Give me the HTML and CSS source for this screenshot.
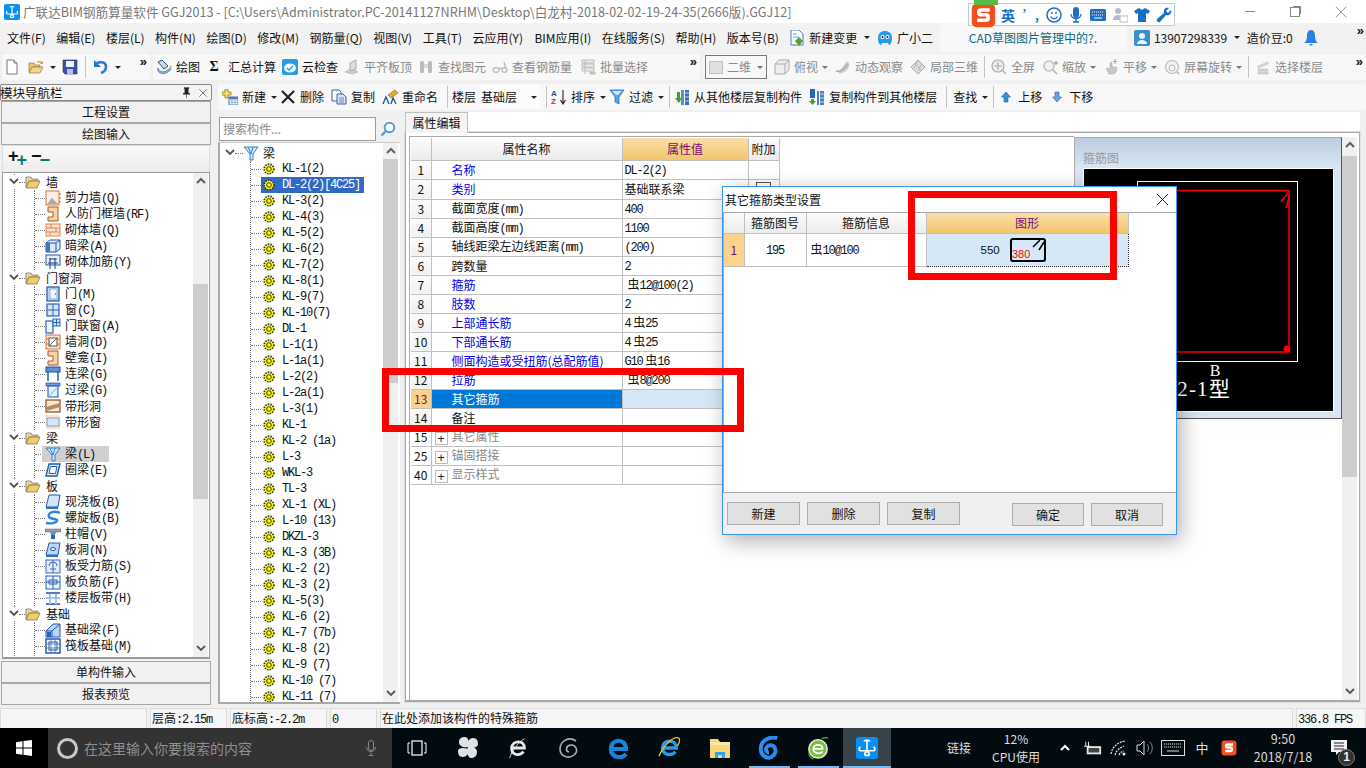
FILE: index.html
```html
<!DOCTYPE html>
<html lang="zh">
<head>
<meta charset="utf-8">
<title>广联达BIM钢筋算量软件 GGJ2013</title>
<link rel="stylesheet" href="styles.css">
</head>
<body>
<svg class="sprite" aria-hidden="true">
<defs>
<symbol id="bead" viewBox="0 0 16 16"><circle cx="8" cy="8" r="4.800" fill="#ff0" stroke="#333" stroke-width="1.700" stroke-dasharray="1.500 1.100"/><circle cx="8" cy="8" r="2.300" fill="#ff0" stroke="#222" stroke-width=".9"/></symbol>
<symbol id="folder" viewBox="0 0 16 16"><path d="M1 3h5l1 2h6v2H4L1 13z" fill="#e8d8a8" stroke="#8a7a50" stroke-width=".8"/><path d="M1 14l3-7h11l-3 7z" fill="#f1c96a" stroke="#8a7a50" stroke-width=".8"/></symbol>
<symbol id="beam" viewBox="0 0 16 16"><path d="M1 2h14l-5 7v6H7V9z" fill="#cfe6f8" stroke="#2f7fc8"/><path d="M5 2l3 7M10 2l-2 7" stroke="#2f7fc8" fill="none"/></symbol>
<symbol id="shear" viewBox="0 0 16 16"><rect x="1" y="1" width="13" height="14" fill="#fbeee3" stroke="#c77a45"/><path d="M2 14l5-6 6 6z" fill="#aaa"/><path d="M15 3v2M15 7v2M15 11v2" stroke="#d06a20"/></symbol>
<symbol id="frame" viewBox="0 0 16 16"><path d="M3 1h10v14H3v-4h5V6H3z" fill="#f7d2ac" stroke="#a85a20"/></symbol>
<symbol id="brick" viewBox="0 0 16 16"><rect x="1" y="2" width="14" height="12" fill="#fde2c8" stroke="#d98a55"/><path d="M1 6h14M1 10h14M6 2v4M11 6v4M5 10v4" stroke="#d98a55" fill="none"/></symbol>
<symbol id="dark" viewBox="0 0 16 16"><path d="M1 5l4-3h10v9l-4 3H1z" fill="#dbe8f6" stroke="#24559b"/><path d="M1 5h10v9M11 5l4-3" fill="none" stroke="#24559b"/><rect x="1" y="5" width="4" height="9" fill="#3f78bb"/></symbol>
<symbol id="mrebar" viewBox="0 0 16 16"><rect x="1" y="1" width="14" height="10" fill="#e6f0fb" stroke="#2a5ca8"/><path d="M4 5h8M5 4v11M10 4v11M3 9h10" stroke="#1a3f90" fill="none"/></symbol>
<symbol id="door" viewBox="0 0 16 16"><rect x="2" y="1" width="12" height="14" fill="#bcd6f4" stroke="#1c55a8" stroke-width="1.200"/><rect x="5" y="3" width="7" height="10" fill="#f1f7fe" stroke="#6a98d6" stroke-width=".7"/><circle cx="10.500" cy="8" r=".7" fill="#1c55a8"/></symbol>
<symbol id="win" viewBox="0 0 16 16"><rect x="2" y="2" width="12" height="12" fill="#d6e7fa" stroke="#2a62b8" stroke-width="1.200"/><path d="M8 2v12M2 8h12" stroke="#2a62b8"/></symbol>
<symbol id="dw" viewBox="0 0 16 16"><rect x="1" y="3" width="7" height="12" fill="#eef5fd" stroke="#2a62b8" stroke-width="1.200"/><rect x="8" y="1" width="7" height="7" fill="#cfe2f8" stroke="#2a62b8"/><path d="M11.500 1v7M8 4.500h7" stroke="#2a62b8"/></symbol>
<symbol id="whole" viewBox="0 0 16 16"><rect x="1" y="1" width="14" height="14" fill="#fbe3ce" stroke="#c77a45"/><path d="M1 5h3M1 10h3M12 5h3M12 10h3" stroke="#c77a45"/><rect x="4" y="4" width="8" height="8" fill="#fff" stroke="#555"/><path d="M4 12l8-8" stroke="#555"/></symbol>
<symbol id="link" viewBox="0 0 16 16"><rect x="1" y="1" width="14" height="5" fill="#5f8fd0" stroke="#1c4fa0"/><path d="M3 6v9M13 6v9" stroke="#1c4fa0" stroke-width="1.400"/></symbol>
<symbol id="lintel" viewBox="0 0 16 16"><rect x="1" y="1" width="14" height="3" fill="#6f9fdc" stroke="#1c4fa0" stroke-width=".7"/><rect x="3" y="4" width="10" height="11" fill="#e2eefb" stroke="#1c4fa0"/><path d="M3 15L13 5" stroke="#7fa8dc"/></symbol>
<symbol id="strip" viewBox="0 0 16 16"><rect x="1" y="2" width="14" height="12" fill="#fbe6d0" stroke="#8a4a20" stroke-width="1.200"/><path d="M1 9L15 5v4L1 13z" fill="#b98a60"/></symbol>
<symbol id="stripw" viewBox="0 0 16 16"><rect x="1" y="1" width="14" height="14" fill="#fbe3ce"/><rect x="2" y="4" width="12" height="8" fill="#d6e6fa" stroke="#7ea4d8"/></symbol>
<symbol id="ring" viewBox="0 0 16 16"><path d="M4 2h11l-3 12H1z" fill="#eaf3fd" stroke="#1c5ab0" stroke-width="1.400"/><path d="M5.500 4.500h6.500l-1.500 7H4z" fill="#fff" stroke="#1c5ab0"/></symbol>
<symbol id="slab" viewBox="0 0 16 16"><path d="M4 1h11l-2 12H1z" fill="#d2e5fb" stroke="#1c5ab0"/><path d="M1 13h12v2H1z" fill="#2a6fc8"/></symbol>
<symbol id="spiral" viewBox="0 0 16 16"><path d="M15 3C9 0 2 3 4 7c2 3 9 1 8 4-1 2-6 3-11 2" fill="none" stroke="#2a84dc" stroke-width="2.400"/></symbol>
<symbol id="cap" viewBox="0 0 16 16"><rect x="0" y="3" width="16" height="3" fill="#9a9a9a" stroke="#666" stroke-width=".5"/><path d="M5 6h6l-1 3H6z" fill="#5a8fd0"/><rect x="6" y="9" width="4" height="4" fill="#2a62b0"/></symbol>
<symbol id="shole" viewBox="0 0 16 16"><path d="M4 1h11l-2 12H1z" fill="#bcd7f6" stroke="#1c5ab0"/><ellipse cx="8" cy="7" rx="2.500" ry="1.500" fill="#fff" stroke="#1c5ab0"/><path d="M1 13h12v2H1z" fill="#2a6fc8"/></symbol>
<symbol id="srebar" viewBox="0 0 16 16"><rect x="1" y="2" width="14" height="13" fill="#e2edfb" stroke="#3a6fb8"/><path d="M8 2v13M4 8a4 4 0 0 1 8 0" fill="none" stroke="#3a6fb8"/><path d="M5 11h6" stroke="#3a6fb8"/></symbol>
<symbol id="nrebar" viewBox="0 0 16 16"><rect x="1" y="2" width="14" height="13" fill="#e8f1fc" stroke="#2a62b0"/><path d="M8 2v13M1 8h14M4 6h8v4H4z" fill="none" stroke="#2a62b0"/></symbol>
<symbol id="band" viewBox="0 0 16 16"><path d="M1 3h14M1 14h14" stroke="#1c4fa0" stroke-width="1.600"/><path d="M5 3v11M11 3v11M1 8h14" stroke="#4f84c8"/><rect x="4" y="8" width="2" height="6" fill="#a8c8ee"/><rect x="10" y="8" width="2" height="6" fill="#a8c8ee"/></symbol>
<symbol id="fbeam" viewBox="0 0 16 16"><path d="M1 15V9l7-7h7v13z" fill="#bcd4f0" stroke="#1c5ab0"/><path d="M1 9h6v6M7 9l8-7" fill="none" stroke="#1c5ab0"/><rect x="2" y="10" width="4" height="5" fill="#2a62b8"/></symbol>
<symbol id="raft" viewBox="0 0 16 16"><rect x="1" y="1" width="14" height="14" fill="#fff" stroke="#1c4fa0" stroke-width="1.400"/><rect x="4" y="4" width="8" height="8" fill="none" stroke="#1c4fa0"/><path d="M1 6h14M1 10h14M6 1v14M10 1v14" stroke="#3a6fb8" stroke-width=".8"/></symbol>
<symbol id="sump" viewBox="0 0 16 16"><path d="M2 4h4M10 4h4" stroke="#1c5ab0" stroke-width="2"/></symbol>
<symbol id="newdoc" viewBox="0 0 16 16"><path d="M3 1h7l3 3v11H3z" fill="#fff" stroke="#777"/><path d="M10 1v3h3" fill="#e4e4e4" stroke="#777"/></symbol>
<symbol id="open" viewBox="0 0 16 16"><path d="M1 4h5l1 2h5v2H4l-2 5H1z" fill="#e8c870" stroke="#9a7a30" stroke-width=".7"/><path d="M1 14l3-6h11l-3 6z" fill="#f2d68a" stroke="#9a7a30" stroke-width=".7"/><path d="M8 4c1-2 4-3 6-1l1-1v3h-3l1-1c-1-1-3-1-5 0z" fill="#c7a040"/></symbol>
<symbol id="save" viewBox="0 0 16 16"><path d="M1 1h14v14H3l-2-2z" fill="#3d4fa8" stroke="#26336e" stroke-width=".6"/><rect x="4" y="2" width="8" height="6" fill="#eef2ff"/><rect x="5" y="10" width="6" height="5" fill="#b8c2e8"/></symbol>
<symbol id="undo" viewBox="0 0 16 16"><path d="M2 6c3-4 11-4 11 2 0 3-2 5-5 6" fill="none" stroke="#2a78d0" stroke-width="2.600"/><path d="M1 1v7h7z" fill="#2a78d0"/></symbol>
<symbol id="draw" viewBox="0 0 16 16"><path d="M2 9c-2 4 4 7 8 5 3-1 5-3 5-5l-5 3C6 14 3 12 2 9z" fill="#8fb0dc" stroke="#3a5f9a" stroke-width=".6"/><path d="M2 3l4-2 6 6-4 3z" fill="#c9d8ee" stroke="#2d4f80"/><path d="M13 9l2-3 1 1-2 3z" fill="#d8b040"/></symbol>
<symbol id="cloud" viewBox="0 0 16 16"><rect x="0" y="0" width="16" height="16" rx="2" fill="#2b9be0"/><ellipse cx="8" cy="9" rx="6" ry="4.500" fill="#eef8ff"/><path d="M5 9l2 2 4-4" fill="none" stroke="#2b9be0" stroke-width="1.400"/></symbol>
<symbol id="align" viewBox="0 0 16 16"><path d="M1 13l6-3 7 3-6 2z" fill="#ccc" stroke="#aaa" stroke-width=".6"/><path d="M6 10V4l6-3v9l-5 2z" fill="#ddd" stroke="#aaa"/></symbol>
<symbol id="bino" viewBox="0 0 16 16"><rect x="2" y="2" width="4" height="12" rx="1.500" fill="#bbb"/><rect x="10" y="2" width="4" height="12" rx="1.500" fill="#bbb"/><rect x="6" y="5" width="4" height="4" fill="#d8d8d8"/></symbol>
<symbol id="glass" viewBox="0 0 16 16"><path d="M1 11c0-3 6-3 6 0s-6 3-6 0zM10 11c0-3 5-3 5 0s-5 3-5 0zM7 10c1-1 2-1 3 0M14 10l-2-7" fill="none" stroke="#bbb" stroke-width="1.300"/></symbol>
<symbol id="batch" viewBox="0 0 16 16"><path d="M2 1h12v3H2zM2 5h12v3H2zM2 9h12v3H2z" fill="#eee" stroke="#bbb"/><path d="M5 1v14M10 13h5v2h-5z" fill="#ccc" stroke="#bbb"/></symbol>
<symbol id="cube" viewBox="0 0 16 16"><path d="M1 5l4-4h10v10l-4 4H1z" fill="#eee" stroke="#aaa"/><path d="M1 5h10v10M11 5l4-4" fill="none" stroke="#aaa"/></symbol>
<symbol id="orbit" viewBox="0 0 16 16"><path d="M3 14l9-12c3 2 3 6 0 9s-7 4-9 3z" fill="#ccc"/><path d="M1 12c3 1 8-1 12-7" fill="none" stroke="#aaa" stroke-width="1.400"/></symbol>
<symbol id="local" viewBox="0 0 16 16"><path d="M8 1l7 7-7 7-7-7z" fill="#ddd" stroke="#aaa"/><path d="M4 4l8 8M8 1L4 9M12 4l-4 8" fill="none" stroke="#aaa" stroke-width=".8"/></symbol>
<symbol id="zfull" viewBox="0 0 16 16"><circle cx="7" cy="7" r="6" fill="#f0f0f0" stroke="#aaa" stroke-width="1.200"/><path d="M7 3v8M3 7h8M11 11l4 4" stroke="#aaa" stroke-width="1.200"/></symbol>
<symbol id="zoom" viewBox="0 0 16 16"><circle cx="7" cy="7" r="5" fill="#f2f2f2" stroke="#c0c0c0" stroke-width="1.600"/><path d="M11 11l4 4M14 2v4M12 4h4" stroke="#aaa" stroke-width="1.400"/></symbol>
<symbol id="pan" viewBox="0 0 16 16"><path d="M3 9l4 1V4c1-1 2-1 2 0v4h4c1 0 1 3 0 5l-2 2H6z" fill="#c8c8c8" stroke="#aaa" stroke-width=".6"/><path d="M12 0v5M10 2.500h4" stroke="#aaa"/></symbol>
<symbol id="rot" viewBox="0 0 16 16"><circle cx="8" cy="8" r="6.500" fill="#f2f2f2" stroke="#bbb" stroke-width="1.200"/><circle cx="8" cy="9" r="3" fill="none" stroke="#bbb"/><path d="M13 13l2 2" stroke="#aaa" stroke-width="1.400"/></symbol>
<symbol id="layer" viewBox="0 0 16 16"><path d="M3 7l10-4v2L3 9zM3 10h10v2H3zM3 13h10v2H3z" fill="#d8d8d8" stroke="#bbb" stroke-width=".6"/></symbol>
<symbol id="tnew" viewBox="0 0 16 16"><path d="M3 0h3v3h3v3H6v3H3V6H0V3h3z" fill="#f7e06a" stroke="#7a6a10" stroke-width=".7"/><rect x="7" y="8" width="9" height="8" fill="#fff" stroke="#4f78b0"/><path d="M7 11h9M10 8v8M13 8v8M7 13.500h9" stroke="#6f96c8" stroke-width=".7"/><rect x="7" y="8" width="9" height="2" fill="#4f78b0"/></symbol>
<symbol id="tdel" viewBox="0 0 16 16"><path d="M2 2l12 12M14 2L2 14" stroke="#222" stroke-width="2.200"/></symbol>
<symbol id="tcopy" viewBox="0 0 16 16"><path d="M1 1h7l2 2v9H1z" fill="#fff" stroke="#3a5f9a"/><path d="M6 5h6l3 3v7H6z" fill="#dce8f7" stroke="#3a5f9a"/><path d="M8 9h5M8 11h5M8 13h5" stroke="#3a5f9a" stroke-width=".7"/></symbol>
<symbol id="tren" viewBox="0 0 16 16"><path d="M6 6l7-5 3 3-7 5z" fill="#d8b040" stroke="#7a6010" stroke-width=".6"/><path d="M1 15l3-7 3 7M9 15l2-6 3 6" fill="none" stroke="#1f4f9f" stroke-width="1.300"/></symbol>
<symbol id="sort" viewBox="0 0 16 16"><text x="0" y="7" class="az az-a">A</text><text x="0" y="15" class="az az-z">Z</text><path d="M12 1v13M9.500 11l2.500 4 2.500-4" fill="none" stroke="#222" stroke-width="1.100"/></symbol>
<symbol id="filter" viewBox="0 0 16 16"><path d="M1 1h14L10 8v7l-4-2V8z" fill="#5aa2e8" stroke="#1f6ab8" stroke-width=".7"/><path d="M3 2h10L9 6H7z" fill="#cfe6fa"/></symbol>
<symbol id="cin" viewBox="0 0 16 16"><path d="M1 9l4 5 3-5H6V3H3v6z" fill="#3aa03a"/><rect x="7" y="1" width="3" height="15" fill="#5a8fd0"/><rect x="11" y="1" width="4" height="15" fill="#3a6fb0"/><path d="M11 4h4M11 8h4M11 12h4" stroke="#fff" stroke-width=".7"/></symbol>
<symbol id="cout" viewBox="0 0 16 16"><rect x="1" y="0" width="5" height="9" fill="#2a62c0"/><path d="M2 10h3v2h2l-3.500 4L0 12h2z" fill="#3aa03a"/><path d="M8 2h2v14H8zM11 2h4v14h-4z" fill="#4f7fc0"/><path d="M11 5h4M11 9h4M11 13h4" stroke="#fff" stroke-width=".7"/></symbol>
<symbol id="up" viewBox="0 0 16 16"><path d="M8 3l4.500 5H10v5H6V8H3.500z" fill="#3a8fe0" stroke="#1c5ab0" stroke-width=".6"/></symbol>
<symbol id="down" viewBox="0 0 16 16"><path d="M8 13L3.500 8H6V3h4v5h2.500z" fill="#6f9fe0" stroke="#3a62b0" stroke-width=".6"/></symbol>
<symbol id="mdoc" viewBox="0 0 16 16"><path d="M2 0h8l4 4v11H2z" fill="#fff" stroke="#3a7fd0"/><path d="M4 4h4M4 7h6" stroke="#3a7fd0" stroke-width=".8"/><path d="M10 7l4 4-4 5-4-5z" fill="#5aa02a"/></symbol>
<symbol id="masc" viewBox="0 0 16 16"><path d="M1 8c0-5 3-7 7-7s7 2 7 7c0 5-2 7-3 7l-1-2H5l-1 2C3 15 1 13 1 8z" fill="#2a9be8"/><circle cx="5.500" cy="7" r="2" fill="#fff"/><circle cx="10.500" cy="7" r="2" fill="#fff"/><circle cx="5.500" cy="7" r="1" fill="#124"/><circle cx="10.500" cy="7" r="1" fill="#124"/></symbol>
<symbol id="avatar" viewBox="0 0 16 16"><rect width="16" height="16" rx="2" fill="#3a8fc8"/><circle cx="8" cy="6" r="3" fill="#eaf5fc"/><path d="M3 14c0-3 3-4 5-4s5 1 5 4z" fill="#eaf5fc"/></symbol>
<symbol id="bell" viewBox="0 0 16 16"><path d="M8 0c3 0 4 3 4 6s1 6 3 7H1c2-1 3-4 3-7s1-6 4-6z" fill="#2a7fe0"/><path d="M6 14h4l-2 2z" fill="#2a7fe0"/></symbol>
<symbol id="pin" viewBox="0 0 16 16"><path d="M5 2h6v1H10v6h2v1H4V9h2V3H5zM8 10v5" fill="#222" stroke="#222" stroke-width=".7"/></symbol>
<symbol id="x" viewBox="0 0 16 16"><path d="M2 2l12 12M14 2L2 14" stroke="currentColor" stroke-width="1" fill="none"/></symbol>
<symbol id="chev" viewBox="0 0 10 8"><path d="M1 1l4 4 4-4" fill="none" stroke="#555" stroke-width="1.800"/></symbol>
<symbol id="chup" viewBox="0 0 10 8"><path d="M1 6l4-4 4 4" fill="none" stroke="#606060" stroke-width="2"/></symbol>
<symbol id="lens" viewBox="0 0 16 16"><circle cx="9.500" cy="6.500" r="4.800" fill="#fff" stroke="#4a9fe0" stroke-width="2"/><path d="M6 10l-4.500 4.500" stroke="#4a9fe0" stroke-width="2.400"/></symbol>
<symbol id="sg" viewBox="0 0 16 16"><rect x=".5" y=".5" width="15" height="15" rx="3" fill="#f0501e"/><path d="M12 4.500H6.500c-2 0-2 3 0 3h3c2 0 2 3.500 0 3.500H4" fill="none" stroke="#fff" stroke-width="2.300"/></symbol>
<symbol id="smile" viewBox="0 0 16 16"><circle cx="8" cy="8" r="7" fill="none" stroke="#1a6fc4" stroke-width="1.500"/><path d="M6 5v2M10 5v2M4.500 9.500c2 3 5 3 7 0" fill="none" stroke="#1a6fc4" stroke-width="1.300"/></symbol>
<symbol id="smic" viewBox="0 0 16 16"><rect x="5" y="0" width="6" height="11" rx="3" fill="#1a6fc4"/><path d="M3 7c0 6 10 6 10 0M8 12v3M5 15h6" fill="none" stroke="#1a6fc4" stroke-width="1.300"/></symbol>
<symbol id="skb" viewBox="0 0 16 16"><rect y="2" width="16" height="12" rx="1.500" fill="#1a6fc4"/><path d="M2 5h12M2 8h12" stroke="#fff" stroke-dasharray="1 1"/><path d="M4 11h8" stroke="#fff"/></symbol>
<symbol id="suser" viewBox="0 0 16 16"><circle cx="6" cy="4" r="3" fill="#b4bcc4"/><path d="M1 13c0-4 3-5 5-5s4 1 4 5z" fill="#b4bcc4"/><rect x="8" y="9" width="8" height="6" fill="#fff" stroke="#b4bcc4"/></symbol>
<symbol id="shirt" viewBox="0 0 16 16"><path d="M5 1l3 2 3-2 5 3-2 3-2-1v9H4V6L2 7 0 4z" fill="#1a6fc4"/></symbol>
<symbol id="wrench" viewBox="0 0 16 16"><path d="M15 3l-3 3-2-2 3-3c-3-1-6 1-5 5L1 12c-1 2 1 4 3 3l6-7c4 1 6-2 5-5z" fill="#1a6fc4"/></symbol>
<symbol id="wlogo" viewBox="0 0 16 16"><path d="M0 2.300l6.500-1v6.200H0zM7.500 1.100L16 0v7.500H7.500zM0 8.500h6.500v6.200l-6.500-1zM7.500 8.500H16V16l-8.500-1.200z" fill="#fff"/></symbol>
<symbol id="tmic" viewBox="0 0 16 16"><rect x="5.500" y="0.500" width="5" height="10" rx="2.500" fill="none" stroke="#888"/><path d="M3.500 7c0 6 9 6 9 0M8 12.500V15M5.500 15.500h5" fill="none" stroke="#888"/></symbol>
<symbol id="tv" viewBox="0 0 20 16"><rect x="5" y="1" width="10" height="14" fill="none" stroke="#fff" stroke-width="1.200"/><path d="M3 3H1v10h2M17 3h2v10h-2" fill="none" stroke="#fff"/></symbol>
<symbol id="fan" viewBox="0 0 22 24"><path d="M11 11C6 12 2 10 2 6s3-5 6-5 5 5 3 10zM11 11c5-1 9 1 9 5s-3 6-6 6-5-6-3-11zM11 11C10 6 12 2 16 2s5 3 5 6-5 5-10 3zM11 13c1 4-1 8-5 8s-5-3-5-6 5-4 10-2z" fill="#dfe3e6"/></symbol>
<symbol id="iew" viewBox="0 0 22 26"><path d="M4 13h14c0-9-13-9-14 0 0 8 9 9 13 4" fill="none" stroke="#e8e8e8" stroke-width="3"/><path d="M2 24c2-8 10-18 16-21" fill="none" stroke="#e8e8e8"/></symbol>
<symbol id="swirl" viewBox="0 0 22 24"><path d="M19 5C12 0 3 5 3 13s9 10 14 6 2-10-3-10-6 6-2 7" fill="none" stroke="#aab0b4" stroke-width="1.600"/></symbol>
<symbol id="edge" viewBox="0 0 22 24"><path d="M3 13h15c0-11-15-11-15 0 0 9 11 10 15 5" fill="none" stroke="#1a84e0" stroke-width="4.200"/></symbol>
<symbol id="ie" viewBox="0 0 24 26"><path d="M5 13h15c0-10-15-10-15 0 0 8 10 9 14 4" fill="none" stroke="#2a9bea" stroke-width="3.600"/><path d="M1 22C6 10 17 0 22 2c3 1 1 6-1 9" fill="none" stroke="#f2c81e" stroke-width="1.400"/></symbol>
<symbol id="tfold" viewBox="0 0 22 24"><path d="M1 3h8l2 3h10v16H1z" fill="#f8d674"/><path d="M1 6h20v3H1z" fill="#fbe8a8"/><rect x="6" y="16" width="10" height="6" fill="#2f9fe6"/><rect x="9" y="19" width="4" height="3" fill="#f8d674"/></symbol>
<symbol id="gl" viewBox="0 0 24 26"><path d="M21 2C12 0 3 5 3 14c0 7 6 11 11 9s7-8 3-12c-3-2-7-1-8 2s1 5 3 5" fill="none" stroke="#2a8ff0" stroke-width="4.200"/></symbol>
<symbol id="ge" viewBox="0 0 24 26"><circle cx="12" cy="14" r="10" fill="#7ac143" stroke="#e8f4d8" stroke-width="1.600"/><path d="M7 14h10c0-6-10-6-10 0 0 5 7 6 10 3" fill="none" stroke="#fff" stroke-width="2"/><path d="M16 3c3-2 5-1 7-1" stroke="#4a9a2a" stroke-width="1.500" fill="none"/><path d="M2 18c0 3 2 6 5 7" stroke="#4a9a2a" stroke-width="1.500" fill="none"/></symbol>
<symbol id="app" viewBox="0 0 24 24"><rect width="24" height="24" rx="3" fill="#0a8ef0"/><path d="M12 4v12M5 11c-2 0-2 4 0 4h14c2 0 2-4 0-4M9 5c0-2 6-2 6 0M12 16c-2 0-3 3-2 4h4c1-1 0-4-2-4z" fill="none" stroke="#fff" stroke-width="1.800"/></symbol>
<symbol id="trayb" viewBox="0 0 20 16"><rect x="3" y="6" width="16" height="9" fill="#e8e8e8"/><rect x="5" y="8" width="12" height="5" fill="#444"/><path d="M2 1v5M5 1v5M0 6h7" stroke="#fff"/></symbol>
<symbol id="wifi" viewBox="0 0 18 16"><path d="M1 14C2 7 8 2 15 1M5 15c1-4 4-7 9-9M9 15c1-2 2-3 5-4" fill="none" stroke="#e0e0e0" stroke-width="1.300" stroke-dasharray="2 1"/><circle cx="14" cy="14" r="1.600" fill="#e0e0e0"/></symbol>
<symbol id="vol" viewBox="0 0 18 16"><path d="M1 5h3l4-4v14l-4-4H1z" fill="none" stroke="#e0e0e0"/><path d="M11 4c2 2 2 6 0 8M14 2c3 3 3 9 0 12" fill="none" stroke="#888"/></symbol>
<symbol id="kbd" viewBox="0 0 24 16"><rect x=".5" y=".5" width="23" height="15" fill="none" stroke="#e0e0e0"/><path d="M3 4h18M3 7h18" stroke="#e0e0e0" stroke-dasharray="1.200 .8"/><path d="M6 11h12" stroke="#e0e0e0"/></symbol>
<symbol id="note" viewBox="0 0 16 16"><path d="M0 0h16v12H8l-3 3v-3H0z" fill="#f2f2f2"/><path d="M3 3h10M3 6h10M3 9h10" stroke="#222"/></symbol>
</defs>
</svg>

<div class="app">
  <header class="title">
    <svg class="i ttl-ic"><use href="#app"/></svg>
    <span class="ttl-t">广联达BIM钢筋算量软件 GGJ2013 - [C:\Users\Administrator.PC-20141127NRHM\Desktop\白龙村-2018-02-02-19-24-35(2666版).GGJ12]</span>
    <div class="wc">
      <span class="wc-min"></span>
      <span class="wc-max"></span>
      <svg class="i wc-x"><use href="#x"/></svg>
    </div>
  </header>

  <nav class="menu">
    <span>文件(F)</span><span>编辑(E)</span><span>楼层(L)</span><span>构件(N)</span><span>绘图(D)</span><span>修改(M)</span><span>钢筋量(Q)</span><span>视图(V)</span><span>工具(T)</span><span>云应用(Y)</span><span class="bim">BIM应用(I)</span><span>在线服务(S)</span><span>帮助(H)</span><span>版本号(B)</span>
    <span class="it"><svg class="i"><use href="#mdoc"/></svg>新建变更<b class="dd dd-m"></b></span>
    <span class="it"><svg class="i"><use href="#masc"/></svg>广小二</span>
    <span class="cad">CAD草图图片管理中的?.</span>
    <span class="it acct"><svg class="i"><use href="#avatar"/></svg>13907298339<b class="dd dd-m"></b></span>
    <span class="bean">造价豆:0</span>
    <svg class="i bell"><use href="#bell"/></svg>
    <span class="more">»</span>
  </nav>

  <div class="tbar1">
    <div class="blk b1">
      <svg class="i b1-new"><use href="#newdoc"/></svg>
      <svg class="i"><use href="#open"/></svg><b class="dd"></b>
      <svg class="i"><use href="#save"/></svg>
      <span class="sep"></span>
      <svg class="i"><use href="#undo"/></svg><b class="dd"></b>
      <span class="more">»</span>
    </div>
    <div class="blk b2">
      <span class="it"><svg class="i"><use href="#draw"/></svg>绘图</span>
      <span class="it"><span class="sig">Σ</span>汇总计算</span>
      <span class="it"><svg class="i"><use href="#cloud"/></svg>云检查</span>
      <span class="it off"><svg class="i"><use href="#align"/></svg>平齐板顶</span>
      <span class="it off"><svg class="i"><use href="#bino"/></svg>查找图元</span>
      <span class="it off"><svg class="i"><use href="#glass"/></svg>查看钢筋量</span>
      <span class="it off b2-last"><svg class="i"><use href="#batch"/></svg>批量选择</span>
      <span class="more">»</span>
    </div>
    <div class="blk b3">
      <span class="combo off"><i class="sq"></i>二维<b class="dd dd-g"></b></span>
      <span class="it off"><svg class="i"><use href="#cube"/></svg>俯视<b class="dd dd-g"></b></span>
      <span class="it off"><svg class="i"><use href="#orbit"/></svg>动态观察</span>
      <span class="it off"><svg class="i"><use href="#local"/></svg>局部三维</span>
      <span class="sep"></span>
      <span class="it off"><svg class="i"><use href="#zfull"/></svg>全屏</span>
      <span class="it off"><svg class="i"><use href="#zoom"/></svg>缩放<b class="dd dd-g"></b></span>
      <span class="it off"><svg class="i"><use href="#pan"/></svg>平移<b class="dd dd-g"></b></span>
      <span class="it off"><svg class="i"><use href="#rot"/></svg>屏幕旋转<b class="dd dd-g"></b></span>
      <span class="sep"></span>
      <span class="it off"><svg class="i"><use href="#layer"/></svg>选择楼层</span>
      <span class="more">»</span>
    </div>
  </div>

  <main class="main">
    <aside class="left">
      <div class="lhead"><span>模块导航栏</span><svg class="i pin"><use href="#pin"/></svg><svg class="i lx"><use href="#x"/></svg></div>
      <div class="lbtn">工程设置</div>
      <div class="lbtn">绘图输入</div>
      <div class="ltools">
        <span class="pm">+<em>+</em></span>
        <span class="pm mn">−<em>−</em></span>
      </div>
      <div class="ltree">
        <div class="tbody">
          <div class="sec">
            <div class="sh"><svg class="c"><use href="#chev"/></svg><i class="tk6"></i><svg class="i"><use href="#folder"/></svg><span>墙</span></div>
            <div class="grp">
              <div class="n"><i class="tk"></i><svg class="i"><use href="#shear"/></svg><span>剪力墙<span class="m">(Q)</span></span></div>
              <div class="n"><i class="tk"></i><svg class="i"><use href="#frame"/></svg><span>人防门框墙<span class="m">(RF)</span></span></div>
              <div class="n"><i class="tk"></i><svg class="i"><use href="#brick"/></svg><span>砌体墙<span class="m">(Q)</span></span></div>
              <div class="n"><i class="tk"></i><svg class="i"><use href="#dark"/></svg><span>暗梁<span class="m">(A)</span></span></div>
              <div class="n"><i class="tk"></i><svg class="i"><use href="#mrebar"/></svg><span>砌体加筋<span class="m">(Y)</span></span></div>
            </div>
          </div>
          <div class="sec">
            <div class="sh"><svg class="c"><use href="#chev"/></svg><i class="tk6"></i><svg class="i"><use href="#folder"/></svg><span>门窗洞</span></div>
            <div class="grp">
              <div class="n"><i class="tk"></i><svg class="i"><use href="#door"/></svg><span>门<span class="m">(M)</span></span></div>
              <div class="n"><i class="tk"></i><svg class="i"><use href="#win"/></svg><span>窗<span class="m">(C)</span></span></div>
              <div class="n"><i class="tk"></i><svg class="i"><use href="#dw"/></svg><span>门联窗<span class="m">(A)</span></span></div>
              <div class="n"><i class="tk"></i><svg class="i"><use href="#whole"/></svg><span>墙洞<span class="m">(D)</span></span></div>
              <div class="n"><i class="tk"></i><svg class="i"><use href="#frame"/></svg><span>壁龛<span class="m">(I)</span></span></div>
              <div class="n"><i class="tk"></i><svg class="i"><use href="#link"/></svg><span>连梁<span class="m">(G)</span></span></div>
              <div class="n"><i class="tk"></i><svg class="i"><use href="#lintel"/></svg><span>过梁<span class="m">(G)</span></span></div>
              <div class="n"><i class="tk"></i><svg class="i"><use href="#strip"/></svg><span>带形洞</span></div>
              <div class="n"><i class="tk"></i><svg class="i"><use href="#stripw"/></svg><span>带形窗</span></div>
            </div>
          </div>
          <div class="sec">
            <div class="sh"><svg class="c"><use href="#chev"/></svg><i class="tk6"></i><svg class="i"><use href="#folder"/></svg><span>梁</span></div>
            <div class="grp">
              <div class="n"><i class="tk"></i><span class="hl"><svg class="i"><use href="#beam"/></svg><span>梁<span class="m">(L)</span></span></span></div>
              <div class="n"><i class="tk"></i><svg class="i"><use href="#ring"/></svg><span>圈梁<span class="m">(E)</span></span></div>
            </div>
          </div>
          <div class="sec">
            <div class="sh"><svg class="c"><use href="#chev"/></svg><i class="tk6"></i><svg class="i"><use href="#folder"/></svg><span>板</span></div>
            <div class="grp">
              <div class="n"><i class="tk"></i><svg class="i"><use href="#slab"/></svg><span>现浇板<span class="m">(B)</span></span></div>
              <div class="n"><i class="tk"></i><svg class="i"><use href="#spiral"/></svg><span>螺旋板<span class="m">(B)</span></span></div>
              <div class="n"><i class="tk"></i><svg class="i"><use href="#cap"/></svg><span>柱帽<span class="m">(V)</span></span></div>
              <div class="n"><i class="tk"></i><svg class="i"><use href="#shole"/></svg><span>板洞<span class="m">(N)</span></span></div>
              <div class="n"><i class="tk"></i><svg class="i"><use href="#srebar"/></svg><span>板受力筋<span class="m">(S)</span></span></div>
              <div class="n"><i class="tk"></i><svg class="i"><use href="#nrebar"/></svg><span>板负筋<span class="m">(F)</span></span></div>
              <div class="n"><i class="tk"></i><svg class="i"><use href="#band"/></svg><span>楼层板带<span class="m">(H)</span></span></div>
            </div>
          </div>
          <div class="sec">
            <div class="sh"><svg class="c"><use href="#chev"/></svg><i class="tk6"></i><svg class="i"><use href="#folder"/></svg><span>基础</span></div>
            <div class="grp">
              <div class="n"><i class="tk"></i><svg class="i"><use href="#fbeam"/></svg><span>基础梁<span class="m">(F)</span></span></div>
              <div class="n"><i class="tk"></i><svg class="i"><use href="#raft"/></svg><span>筏板基础<span class="m">(M)</span></span></div>
              <div class="n"><i class="tk"></i><svg class="i"><use href="#sump"/></svg></div>
            </div>
          </div>
        </div>
        <div class="vs vs-l">
          <svg class="ar"><use href="#chup"/></svg>
          <div class="thumb"></div>
          <svg class="ar"><use href="#chev"/></svg>
        </div>
      </div>
      <div class="lbtn lb2">单构件输入</div>
      <div class="lbtn">报表预览</div>
    </aside>

    <section class="right">
      <div class="tbar2">
        <span class="it"><svg class="i"><use href="#tnew"/></svg>新建<b class="dd"></b></span>
        <span class="it"><svg class="i"><use href="#tdel"/></svg>删除</span>
        <span class="it"><svg class="i"><use href="#tcopy"/></svg>复制</span>
        <span class="it"><svg class="i"><use href="#tren"/></svg>重命名</span>
        <span class="sep"></span>
        <span>楼层</span>
        <span class="fl">基础层<b class="dd"></b></span>
        <span class="sep"></span>
        <span class="it"><svg class="i"><use href="#sort"/></svg>排序<b class="dd"></b></span>
        <span class="it"><svg class="i"><use href="#filter"/></svg>过滤<b class="dd"></b></span>
        <span class="sep"></span>
        <span class="it"><svg class="i"><use href="#cin"/></svg>从其他楼层复制构件</span>
        <span class="it"><svg class="i"><use href="#cout"/></svg>复制构件到其他楼层</span>
        <span class="sep"></span>
        <span class="it find">查找<b class="dd"></b></span>
        <span class="sep"></span>
        <span class="it"><svg class="i"><use href="#up"/></svg>上移</span>
        <span class="it"><svg class="i"><use href="#down"/></svg>下移</span>
      </div>

      <div class="work">
        <div class="mid">
          <div class="searchrow">
            <div class="sbox">搜索构件...</div>
            <svg class="i lens"><use href="#lens"/></svg>
          </div>
          <div class="mtree">
            <div class="tbody">
              <div class="sh root"><svg class="c"><use href="#chev"/></svg><i class="tk7"></i><svg class="i"><use href="#beam"/></svg><span>梁</span></div>
              <div class="grp2">
                <div class="n"><i class="tk"></i><span class="nb"><svg class="i"><use href="#bead"/></svg><span class="m">KL-1(2)</span></span></div>
                <div class="n"><i class="tk"></i><span class="nb sel"><svg class="i"><use href="#bead"/></svg><span class="m">DL-2(2)[4C25]</span></span></div>
                <div class="n"><i class="tk"></i><span class="nb"><svg class="i"><use href="#bead"/></svg><span class="m">KL-3(2)</span></span></div>
                <div class="n"><i class="tk"></i><span class="nb"><svg class="i"><use href="#bead"/></svg><span class="m">KL-4(3)</span></span></div>
                <div class="n"><i class="tk"></i><span class="nb"><svg class="i"><use href="#bead"/></svg><span class="m">KL-5(2)</span></span></div>
                <div class="n"><i class="tk"></i><span class="nb"><svg class="i"><use href="#bead"/></svg><span class="m">KL-6(2)</span></span></div>
                <div class="n"><i class="tk"></i><span class="nb"><svg class="i"><use href="#bead"/></svg><span class="m">KL-7(2)</span></span></div>
                <div class="n"><i class="tk"></i><span class="nb"><svg class="i"><use href="#bead"/></svg><span class="m">KL-8(1)</span></span></div>
                <div class="n"><i class="tk"></i><span class="nb"><svg class="i"><use href="#bead"/></svg><span class="m">KL-9(7)</span></span></div>
                <div class="n"><i class="tk"></i><span class="nb"><svg class="i"><use href="#bead"/></svg><span class="m">KL-10(7)</span></span></div>
                <div class="n"><i class="tk"></i><span class="nb"><svg class="i"><use href="#bead"/></svg><span class="m">DL-1</span></span></div>
                <div class="n"><i class="tk"></i><span class="nb"><svg class="i"><use href="#bead"/></svg><span class="m">L-1(1)</span></span></div>
                <div class="n"><i class="tk"></i><span class="nb"><svg class="i"><use href="#bead"/></svg><span class="m">L-1a(1)</span></span></div>
                <div class="n"><i class="tk"></i><span class="nb"><svg class="i"><use href="#bead"/></svg><span class="m">L-2(2)</span></span></div>
                <div class="n"><i class="tk"></i><span class="nb"><svg class="i"><use href="#bead"/></svg><span class="m">L-2a(1)</span></span></div>
                <div class="n"><i class="tk"></i><span class="nb"><svg class="i"><use href="#bead"/></svg><span class="m">L-3(1)</span></span></div>
                <div class="n"><i class="tk"></i><span class="nb"><svg class="i"><use href="#bead"/></svg><span class="m">KL-1</span></span></div>
                <div class="n"><i class="tk"></i><span class="nb"><svg class="i"><use href="#bead"/></svg><span class="m">KL-2 (1a)</span></span></div>
                <div class="n"><i class="tk"></i><span class="nb"><svg class="i"><use href="#bead"/></svg><span class="m">L-3</span></span></div>
                <div class="n"><i class="tk"></i><span class="nb"><svg class="i"><use href="#bead"/></svg><span class="m">WKL-3</span></span></div>
                <div class="n"><i class="tk"></i><span class="nb"><svg class="i"><use href="#bead"/></svg><span class="m">TL-3</span></span></div>
                <div class="n"><i class="tk"></i><span class="nb"><svg class="i"><use href="#bead"/></svg><span class="m">XL-1 (XL)</span></span></div>
                <div class="n"><i class="tk"></i><span class="nb"><svg class="i"><use href="#bead"/></svg><span class="m">L-10 (13)</span></span></div>
                <div class="n"><i class="tk"></i><span class="nb"><svg class="i"><use href="#bead"/></svg><span class="m">DKZL-3</span></span></div>
                <div class="n"><i class="tk"></i><span class="nb"><svg class="i"><use href="#bead"/></svg><span class="m">KL-3 (3B)</span></span></div>
                <div class="n"><i class="tk"></i><span class="nb"><svg class="i"><use href="#bead"/></svg><span class="m">KL-2 (2)</span></span></div>
                <div class="n"><i class="tk"></i><span class="nb"><svg class="i"><use href="#bead"/></svg><span class="m">KL-3 (2)</span></span></div>
                <div class="n"><i class="tk"></i><span class="nb"><svg class="i"><use href="#bead"/></svg><span class="m">KL-5(3)</span></span></div>
                <div class="n"><i class="tk"></i><span class="nb"><svg class="i"><use href="#bead"/></svg><span class="m">KL-6 (2)</span></span></div>
                <div class="n"><i class="tk"></i><span class="nb"><svg class="i"><use href="#bead"/></svg><span class="m">KL-7 (7b)</span></span></div>
                <div class="n"><i class="tk"></i><span class="nb"><svg class="i"><use href="#bead"/></svg><span class="m">KL-8 (2)</span></span></div>
                <div class="n"><i class="tk"></i><span class="nb"><svg class="i"><use href="#bead"/></svg><span class="m">KL-9 (7)</span></span></div>
                <div class="n"><i class="tk"></i><span class="nb"><svg class="i"><use href="#bead"/></svg><span class="m">KL-10 (7)</span></span></div>
                <div class="n"><i class="tk"></i><span class="nb"><svg class="i"><use href="#bead"/></svg><span class="m">KL-11 (7)</span></span></div>
              </div>
            </div>
            <div class="vs vs-m">
              <svg class="ar"><use href="#chup"/></svg>
              <div class="thumb"></div>
              <svg class="ar"><use href="#chev"/></svg>
            </div>
          </div>
        </div>

        <div class="pane">
          <div class="tabs"><span class="tab">属性编辑</span></div>
          <div class="pbody">
            <div class="sheet">
              <table class="pt">
                <colgroup><col class="c1"><col class="c2"><col class="c3"><col class="c4"></colgroup>
                <thead><tr><th></th><th>属性名称</th><th class="act">属性值</th><th>附加</th></tr></thead>
                <tbody>
                  <tr><td class="no">1</td><td class="nm lk">名称</td><td class="va"><span class="m">DL-2(2)</span></td><td></td></tr>
                  <tr><td class="no">2</td><td class="nm lk">类别</td><td class="va">基础联系梁</td><td class="ck"><i></i></td></tr>
                  <tr><td class="no">3</td><td class="nm">截面宽度<span class="m">(mm)</span></td><td class="va"><span class="m">400</span></td><td></td></tr>
                  <tr><td class="no">4</td><td class="nm">截面高度<span class="m">(mm)</span></td><td class="va"><span class="m">1100</span></td><td></td></tr>
                  <tr><td class="no">5</td><td class="nm">轴线距梁左边线距离<span class="m">(mm)</span></td><td class="va"><span class="m">(200)</span></td><td></td></tr>
                  <tr><td class="no">6</td><td class="nm">跨数量</td><td class="va"><span class="m">2</span></td><td></td></tr>
                  <tr><td class="no">7</td><td class="nm lk">箍筋</td><td class="va sym">虫<span class="m">12@100(2)</span></td><td></td></tr>
                  <tr><td class="no">8</td><td class="nm lk">肢数</td><td class="va"><span class="m">2</span></td><td></td></tr>
                  <tr><td class="no">9</td><td class="nm lk">上部通长筋</td><td class="va"><span class="m">4</span> 虫<span class="m">25</span></td><td></td></tr>
                  <tr><td class="no">10</td><td class="nm lk">下部通长筋</td><td class="va"><span class="m">4</span> 虫<span class="m">25</span></td><td></td></tr>
                  <tr><td class="no">11</td><td class="nm lk">侧面构造或受扭筋(总配筋值)</td><td class="va"><span class="m">G10</span> 虫<span class="m">16</span></td><td></td></tr>
                  <tr><td class="no">12</td><td class="nm lk">拉筋</td><td class="va sym">虫<span class="m">8@200</span></td><td></td></tr>
                  <tr class="cur"><td class="no">13</td><td class="nm">其它箍筋</td><td class="va"></td><td></td></tr>
                  <tr><td class="no">14</td><td class="nm">备注</td><td class="va"></td><td></td></tr>
                  <tr class="gr"><td class="no">15</td><td class="nm"><i class="plus">+</i>其它属性</td><td class="va"></td><td></td></tr>
                  <tr class="gr"><td class="no">25</td><td class="nm"><i class="plus">+</i>锚固搭接</td><td class="va"></td><td></td></tr>
                  <tr class="gr"><td class="no">40</td><td class="nm"><i class="plus">+</i>显示样式</td><td class="va"></td><td></td></tr>
                </tbody>
              </table>
            </div>
            <div class="draw">
              <div class="dtitle">箍筋图</div>
              <svg class="canvas" viewBox="0 0 251 244">
                <rect x="54.500" y="13.500" width="160" height="180" fill="none" stroke="#fff"/>
                <path d="M60 22.500H206V184H60" fill="none" stroke="#f00" stroke-width="1.500"/>
                <path d="M198 34l7-9M203 40l4-14" stroke="#f00" stroke-width="1.500" fill="none"/>
                <circle cx="204" cy="181" r="3.500" fill="#f00"/>
                <text x="132" y="208" class="cv-b">B</text>
                <text x="148" y="228" class="cv-t">2-1型</text>
              </svg>
            </div>
            <div class="vs vs-r">
              <svg class="ar"><use href="#chup"/></svg>
              <div class="thumb"></div>
              <svg class="ar"><use href="#chev"/></svg>
            </div>
          </div>
        </div>
      </div>
    </section>
  </main>

  <footer class="status">
    <span class="st s0"></span>
    <span class="st s1">层高<span class="m">:2.15m</span></span>
    <span class="st s2">底标高<span class="m">:-2.2m</span></span>
    <span class="st s3"><span class="m">0</span></span>
    <span class="st s4">在此处添加该构件的特殊箍筋</span>
    <span class="st s5"><span class="m">336.8 FPS</span></span>
  </footer>

  <div class="taskbar">
    <div class="start"><svg class="i"><use href="#wlogo"/></svg></div>
    <div class="search"><i class="cortana"></i><span class="stext">在这里输入你要搜索的内容</span><svg class="i"><use href="#tmic"/></svg></div>
    <div class="tasks">
      <span class="task"><svg class="tv-ic"><use href="#tv"/></svg></span>
      <span class="task"><svg class="tic"><use href="#fan"/></svg></span>
      <span class="task"><svg class="tic"><use href="#iew"/></svg></span>
      <span class="task"><svg class="tic"><use href="#swirl"/></svg></span>
      <span class="task"><svg class="tic"><use href="#edge"/></svg></span>
      <span class="task"><svg class="tic"><use href="#ie"/></svg></span>
      <span class="task"><svg class="tic"><use href="#tfold"/></svg></span>
      <span class="task run"><svg class="tic"><use href="#gl"/></svg></span>
      <span class="task run"><svg class="tic"><use href="#ge"/></svg></span>
      <span class="task run act"><svg class="tic"><use href="#app"/></svg></span>
    </div>
    <div class="tray">
      <span class="t-link">链接</span>
      <span class="t-cpu"><span>12%</span><span>CPU使用</span></span>
      <span class="t-up"><svg class="c up"><use href="#chup"/></svg></span>
      <span class="t-i"><svg class="ti"><use href="#trayb"/></svg></span>
      <span class="t-i"><svg class="ti"><use href="#wifi"/></svg></span>
      <span class="t-i"><svg class="ti"><use href="#vol"/></svg></span>
      <span class="t-k"><svg class="tk-ic"><use href="#kbd"/></svg></span>
      <span class="t-z">中</span>
      <span class="t-i"><svg class="ti"><use href="#sg"/></svg></span>
      <span class="t-clock"><span>9:50</span><span>2018/7/18</span></span>
      <span class="t-note"><svg class="i"><use href="#note"/></svg><b class="badge">1</b></span>
    </div>
  </div>

  <div class="sogou">
    <i class="leaf"></i>
    <svg class="sg-s"><use href="#sg"/></svg>
    <span class="sg-y">英</span>
    <span class="sg-p">’,</span>
    <svg class="i"><use href="#smile"/></svg>
    <svg class="i"><use href="#smic"/></svg>
    <svg class="i"><use href="#skb"/></svg>
    <svg class="i"><use href="#suser"/></svg>
    <svg class="i"><use href="#shirt"/></svg>
    <svg class="i"><use href="#wrench"/></svg>
  </div>

  <div class="dlg">
    <div class="dlg-t"><span>其它箍筋类型设置</span><svg class="i dlg-x"><use href="#x"/></svg></div>
    <div class="dlg-b">
      <table class="dt">
        <colgroup><col class="d1"><col class="d2"><col class="d3"><col class="d4"></colgroup>
        <thead><tr><th></th><th>箍筋图号</th><th>箍筋信息</th><th class="act">图形</th></tr></thead>
        <tbody><tr>
          <td class="no on">1</td>
          <td class="ctr"><span class="m">195</span></td>
          <td class="inf">虫<span class="m">10@100</span></td>
          <td class="shp"><div class="shp-in"><span class="n550">550</span>
            <svg class="hook" viewBox="0 0 36 24"><rect x="1" y="1" width="34" height="22" rx="2" fill="none" stroke="#000" stroke-width="2"/><path d="M23 9l7-7M29 12l5-8" stroke="#000" stroke-width="1.500" fill="none"/><text x="2" y="20" class="h380">380</text></svg></div></td>
        </tr></tbody>
      </table>
    </div>
    <div class="dlg-f">
      <div class="dgrp"><button class="btn">新建</button><button class="btn">删除</button><button class="btn">复制</button></div>
      <div class="dgrp dr"><button class="btn b72">确定</button><button class="btn b72">取消</button></div>
    </div>
  </div>

  <div class="mark mk1"></div>
  <div class="mark mk2"></div>
</div>
</body>
</html>
```

FILE: styles.css
```css
* { box-sizing: border-box; }
html, body { margin: 0; padding: 0; }
body {
  width: 1366px; height: 768px; overflow: hidden;
  background: #f0f0f0; color: #111;
  font: 12px/16px "Noto Sans CJK SC", "Liberation Sans", sans-serif;
}
i, em { font-style: normal; }
.sprite { position: absolute; width: 0; height: 0; }
.app { position: relative; width: 1366px; height: 768px; display: flex; flex-direction: column; }
.i { width: 16px; height: 16px; flex: none; display: block; }
.m { font-family: "Liberation Mono", monospace; letter-spacing: -1.2px; }
.it { display: flex; align-items: center; gap: 4px; white-space: nowrap; }
.off { color: #8a8a8a; }
.dd { display: block; flex: none; width: 0; height: 0; border: 3px solid transparent; border-top: 3px solid #222; border-bottom: 0; }
.dd-g { border-top-color: #777; }
.dd-m { margin: 0 -4px 0 3px; }
.sep { flex: none; width: 1px; height: 22px; background: #c4c4c4; }
.more { font: bold 13px/14px "Liberation Sans", sans-serif; margin-left: auto; align-self: flex-start; margin-top: 1px; }
.az { font: bold 8px "Liberation Sans", sans-serif; }
.az-a { fill: #1f4f9f; }
.az-z { fill: #b03030; }

/* title */
.title { flex: none; height: 23px; background: #fff; display: flex; align-items: center; padding-left: 4px; color: #777; }
.ttl-ic { margin-right: 3px; }
.ttl-t { font-size: 12.600px; white-space: nowrap; }
.wc { margin-left: auto; display: flex; align-items: center; width: 126px; height: 23px; }
.wc-min { width: 10px; height: 1px; background: #888; margin-left: 5px; }
.wc-max { width: 10px; height: 10px; border: 1px solid #888; margin-left: 35px; box-shadow: 2px -2px 0 -1px #888; }
.wc-x { margin-left: 34px; color: #888; width: 14px; height: 14px; }

/* menu */
.menu { flex: none; height: 29px; display: flex; align-items: center; gap: 10.500px; padding-left: 7px; white-space: nowrap; background: #f2f2f2; }
.bim { margin-left: 1px; }
.cad { width: 187px; height: 29px; margin-left: -3px; background: #f8f8f8; color: #0b6a80; text-align: center; line-height: 29px; padding-right: 2px; border-radius: 4px 4px 0 0; }
.acct { margin-left: -4px; }
.menu .more { padding-right: 2px; }

/* toolbar 1 */
.tbar1 { flex: none; height: 30px; margin-top: 2px; display: flex; gap: 3px; padding-left: 2px; }
.blk { height: 26px; display: flex; align-items: center; background: #f8f8f8; border-radius: 3px; padding-right: 3px; }
.b1 { width: 148px; padding-left: 2px; gap: 6px; }
.b1-new { margin-right: 2px; }
.b1 .sep { margin: 0 1px 0 1px; }
.b2 { width: 547px; padding-left: 3px; gap: 6px; }
.b2-last { margin-left: 2px; }
.b3 { flex: 1; gap: 7px; padding-left: 2px; }
.b3 .sep { margin: 0 -1px; }
.sig { width: 16px; text-align: center; font: bold 14px/16px "Liberation Serif", serif; color: #111; margin-right: 2px; }
.combo { width: 62px; height: 24px; border: 1px solid #777; display: flex; align-items: center; gap: 4px; padding-left: 3px; }
.combo .dd { margin-left: auto; margin-right: 3px; }
.sq { width: 14px; height: 13px; background: #e0e0e0; border: 1px solid #c0c0c0; }

/* main */
.main { flex: 1; min-height: 0; display: flex; }
.left { width: 212px; flex: none; margin-right: 6px; display: flex; flex-direction: column; }
.lhead { height: 17px; border: 1px solid #888; border-radius: 2px; background: #f4f4f4; display: flex; align-items: center; font-size: 12.500px; padding-right: 1px; }
.lhead span { flex: 1; margin-left: -1px; }
.pin { width: 13px; height: 13px; margin-right: 5px; }
.lx { width: 10px; height: 10px; color: #333; margin-right: 2px; }
.lbtn { height: 22px; margin: 0 1px; border: 1px solid #a8a8a8; background: #f1f1f1; text-align: center; line-height: 20px; }
.ltools { height: 27px; margin: 0 2px; background: linear-gradient(#fafafa, #ececec); display: flex; align-items: center; gap: 4px; padding-left: 5px; border: 1px solid #ddd; border-bottom: 0; }
.pm { font: bold 18px/15px "Liberation Sans", sans-serif; color: #111; display: flex; align-items: flex-start; width: 19px; margin-top: -2px; }
.pm em { color: #0a7a70; margin-left: -2px; margin-top: 4px; }
.ltree { height: 487px; margin: 0 2px; border: 1px solid #999; border-bottom-width: 2px; background: #fff; display: flex; overflow: hidden; }
.tbody { flex: 1; min-width: 0; overflow: hidden; padding-top: 1px; }
.lb2 { margin-top: 2px; }

.sec { margin-left: 11px; border-left: 1px dotted #777; }
.sh { display: flex; align-items: center; height: 16px; margin-left: -6px; }
.c { width: 10px; height: 8px; flex: none; background: #fff; box-shadow: 0 0 0 3px #fff; }
.tk6 { width: 6px; border-top: 1px dotted #777; flex: none; }
.tk7 { width: 8px; border-top: 1px dotted #777; flex: none; }
.tk { width: 10px; border-top: 1px dotted #777; flex: none; }
.sh .i { margin-right: 5px; }
.grp { margin-left: 19px; border-left: 1px dotted #777; margin-bottom: 8px; }
.n { height: 16px; display: flex; align-items: center; white-space: nowrap; }
.grp .n:last-child, .grp2 .n:last-child { margin-bottom: -8px; }
.grp .n > .i { margin-right: 4px; }
.hl { display: flex; align-items: center; gap: 4px; background: #d0d0d0; height: 16px; padding-right: 14px; margin-left: -3px; padding-left: 3px; }
.vs { flex: none; width: 15px; background: #f0f0f0; display: flex; flex-direction: column; align-items: center; }
.ar { width: 10px; height: 8px; flex: none; margin: 4px 0; }
.thumb { align-self: stretch; background: #cdcdcd; }
.vs-l { margin-right: 1px; }
.vs-l .thumb { height: 215px; margin-top: 95px; margin-bottom: auto; }
.vs-l .ar:last-child { margin-top: auto; }
.right { flex: 1; min-width: 0; display: flex; flex-direction: column; }

/* toolbar 2 */
.tbar2 { flex: none; height: 26px; background: #f8f8f8; border-radius: 3px; display: flex; align-items: center; gap: 7px; padding-left: 4px; white-space: nowrap; }
.tbar2 .dd { margin: 0 -4px 0 1px; }
.tbar2 .sep { margin: 0 -3px 0 2px; }
.tbar2 .find { margin-left: 2px; }
.fl { width: 60px; height: 24px; background: #fcfcfc; display: flex; align-items: center; margin: 0 -3px; padding-left: 1px; }
.tbar2 .fl .dd { margin: 0 3px 0 auto; }

/* work area */
.work { flex: 1; min-height: 0; display: flex; }
.mid { width: 182px; flex: none; display: flex; flex-direction: column; padding-top: 7px; }
.searchrow { height: 25px; display: flex; align-items: flex-start; }
.sbox { width: 157px; height: 24px; margin-left: 1px; border: 1px solid #9a9a9a; background: #fff; color: #8a8a8a; padding-left: 3px; line-height: 21px; }
.lens { margin: 4px 0 0 4px; }
.mtree { height: 562px; border-left: 2px solid #a8a8a8; border-top: 1px solid #c8c8c8; border-bottom: 2px solid #a8a8a8; background: #fff; display: flex; overflow: hidden; }
.mtree .tbody { padding-top: 2px; }
.root { margin-left: 5px; }
.root .i { margin-right: 4px; }
.grp2 { margin-left: 30px; border-left: 1px dotted #777; margin-bottom: 8px; }
.nb { display: flex; align-items: center; gap: 5px; height: 16px; }
.sel { background: #316ac5; color: #fff; padding-right: 4px; }
.vs-m { margin-right: 2px; }
.vs-m .thumb { height: 224px; margin-bottom: auto; }
.vs-m .ar:last-child { margin-top: auto; }

/* property pane */
.pane { flex: 1; min-width: 0; margin-left: 5px; margin-right: 6px; padding-top: 2px; display: flex; flex-direction: column; height: 592px; }
.tabs { height: 20px; flex: none; display: flex; background: #fff; }
.tab { width: 63px; height: 21px; background: #f4f4f4; border: 1px solid #c0c0c0; border-bottom: 0; text-align: center; line-height: 19px; position: relative; }
.pbody { flex: 1; min-height: 0; background: #fff; border: 1px solid #aaa; border-bottom: 2px solid #aaa; outline: 1px solid #ddd; display: flex; padding: 3px 2px 0 3px; }
.sheet { flex: 1; min-width: 0; border-top: 1px solid #aaa; border-left: 1px solid #aaa; padding: 1px 0 0 1px; }
.pt, .dt { border-collapse: collapse; table-layout: fixed; background: #fff; }
.pt { width: 368px; }
.c1 { width: 20px; } .c2 { width: 191px; } .c3 { width: 126px; } .c4 { width: 31px; }
.pt th, .dt th { font-weight: normal; height: 22px; padding: 0; border: 1px solid #c0c0c0; border-top: 0; background: linear-gradient(#fbfbfb, #ebebeb); }
.pt th:first-child, .dt th:first-child { border-left: 0; }
.pt th.act, .dt th.act { background: linear-gradient(#fbdfa8, #f3c46c); color: #7a0a78; }
.pt td { height: 19px; padding: 0; border: 1px solid #c0c0c0; white-space: nowrap; overflow: hidden; line-height: 16px; }
.no { text-align: center; background: linear-gradient(#fbfbfb, #f0f0f0); border-left: 0 !important; }
.nm { padding-left: 20px !important; }
.lk { color: #0000f0; }
.va { padding-left: 2px !important; }
.sym { padding-left: 5px !important; }
.ck i { display: block; width: 15px; height: 15px; margin: 2px auto; border: 1px solid #555; }
.cur .no { background: #fbd38a; color: #8a0a50; }
.cur .nm { background: #0078d7; color: #fff; }
.cur .va { background: #d6e8f7; }
.gr .no { background: #fff; }
.gr .nm { color: #888; padding-left: 3px !important; }
.plus { display: inline-block; width: 13px; height: 13px; border: 1px solid #bbb; color: #222; text-align: center; font: 13px/11px "Liberation Sans", sans-serif; margin-right: 4px; vertical-align: -2px; }

/* stirrup drawing */
.draw { flex: none; margin-top: 1px; width: 268px; height: 282px; background: linear-gradient(#bccddf 0, #d9e5f2 30px, #d9e5f2 100%); border: 1px solid #555; border-top-color: #aaa; border-left-color: #aaa; padding: 9px 8px 7px 8px; }
.dtitle { height: 21px; color: #999; line-height: 22px; }
.canvas { display: block; width: 251px; height: 244px; background: #000; box-shadow: 0 0 0 1px #fff inset; }
.cv-b { fill: #fff; font: 16px "Liberation Serif", serif; text-anchor: middle; }
.cv-t { fill: #fff; font: 21px "Liberation Serif", "Noto Sans CJK SC", serif; text-anchor: end; letter-spacing: 1.200px; }
.vs-r { margin-top: 1px; height: 563px; }
.vs-r .thumb { margin-top: 3px; height: 321px; margin-bottom: auto; }
.vs-r .ar:last-child { margin-top: auto; margin-bottom: 4px; }

/* status */
.status { flex: none; height: 20px; display: flex; gap: 3px; background: #f0f0f0; }
.st { height: 20px; background: #f6f6f6; border: 1px solid #dcdcdc; border-bottom: 0; padding: 1px 0 0 1px; white-space: nowrap; }
.s0 { width: 147px; } .s1 { width: 77px; } .s2 { width: 97px; } .s3 { width: 47px; } .s4 { flex: 1; }
.s5 { width: 70px; }

/* taskbar */
.taskbar { flex: none; height: 40px; display: flex; background: #020b10; color: #ddd; }
.start { width: 48px; background: #000; display: flex; align-items: center; justify-content: center; }
.search { width: 344px; background: #333; display: flex; align-items: center; padding-left: 9px; }
.cortana { width: 21px; height: 21px; border: 3px solid #c8c8c8; border-radius: 50%; margin-right: 6px; }
.stext { font-size: 14px; color: #8f8f8f; flex: 1; }
.search .i { margin-right: 13px; }
.tasks { display: flex; width: 500px; }
.task { flex: none; width: 50.400px; display: flex; align-items: center; justify-content: center; border-bottom: 2px solid transparent; padding-top: 2px; }
.task.run { border-bottom-color: #76b9ed; width: 41px; margin: 0 4px; }
.task.act { width: 48px; margin: 0; background: #37444c; }
.tic { width: 22px; height: 24px; }
.tv-ic { width: 20px; height: 16px; }
.tray { display: flex; align-items: center; margin-left: 43px; flex: 1; }
.t-link { width: 48px; text-align: center; }
.t-cpu, .t-clock { display: flex; flex-direction: column; align-items: center; line-height: 18px; }
.t-cpu { width: 66px; }
.t-up { width: 26px; display: flex; justify-content: center; margin-left: 3px; }
.c.up { background: none; box-shadow: none; filter: invert(1) brightness(2); }
.t-i { width: 20px; display: flex; justify-content: center; margin-left: 5px; }
.t-i + .t-i { margin-left: 6px; }
.ti { width: 18px; height: 16px; }
.t-k { width: 26px; margin-left: 6px; }
.tk-ic { width: 24px; height: 16px; display: block; }
.t-z { width: 24px; text-align: center; font-size: 13px; margin-left: 3px; }
.t-clock { width: 72px; font-size: 12.500px; margin-left: 8px; }
.t-note { position: relative; margin-left: 12px; }
.badge { position: absolute; left: 7px; top: 9px; width: 17px; height: 17px; border-radius: 50%; background: #333; border: 1px solid #777; color: #eee; font: bold 12px/15px "Liberation Sans", sans-serif; text-align: center; }

/* floating: sogou */
.sogou { position: absolute; left: 968px; top: 3px; width: 207px; height: 23px; background: #fff; border: 1px solid #b7cadb; display: flex; align-items: center; gap: 6px; padding-right: 3px; }
.leaf { position: absolute; left: 5px; top: -4px; width: 24px; height: 5px; background: #58b848; }
.sg-s { width: 27px; height: 25px; flex: none; margin: 2px 0 0 1px; }
.sg-y { color: #1a6fc4; font-weight: bold; font-size: 14px; margin-left: -2px; margin-right: 2px; }
.sg-p { color: #1a6fc4; font-weight: bold; margin-right: 1px; }

/* floating: dialog */
.dlg { position: absolute; left: 722px; top: 186px; width: 455px; height: 349px; background: #f0f0f0; border: 1px solid #3a96f0; box-shadow: 4px 6px 20px rgba(0, 0, 0, .32); display: flex; flex-direction: column; }
.dlg-t { height: 25px; flex: none; background: #fff; display: flex; align-items: center; padding: 0 6px 0 2px; justify-content: space-between; }
.dlg-x { width: 15px; height: 15px; color: #111; }
.dlg-b { height: 281px; flex: none; background: #fff; border: 1px solid #aaa; border-right: 0; }
.dt { width: 404px; }
.d1 { width: 20px; } .d2 { width: 62px; } .d3 { width: 120px; } .d4 { width: 202px; }
.dt th { height: 20px; border-top: 0; }
.dt td { height: 33px; padding: 0; border-bottom: 1px solid #c0c0c0; border-right: 1px solid #c0c0c0; }
.on { background: #fbd38a; color: #7a0a78; }
.ctr { text-align: center; }
.inf { padding-left: 4px !important; }
.shp { background: #d6e8f7; border: 1px dotted #222 !important; }
.shp-in { display: flex; align-items: center; padding-left: 54px; gap: 10px; }
.n550 { font-family: "Liberation Sans", sans-serif; font-size: 11.500px; }
.hook { width: 36px; height: 24px; display: block; }
.h380 { fill: #f00; font: 11px "Liberation Sans", sans-serif; }
.dlg-f { flex: 1; display: flex; justify-content: space-between; padding: 9px 13px 0 4px; }
.dgrp { display: flex; gap: 7px; }
.dr { margin-top: 1px; }
.btn { width: 73px; height: 23px; padding: 0; background: #e1e1e1; border: 1px solid #adadad; font: inherit; color: #111; }
.b72 { width: 72px; }

/* floating: red markup */
.mark { position: absolute; border: 7px solid #f00; pointer-events: none; }
.mk1 { left: 908px; top: 191px; width: 209px; height: 89px; }
.mk2 { left: 382px; top: 368px; width: 362px; height: 64px; }
```
